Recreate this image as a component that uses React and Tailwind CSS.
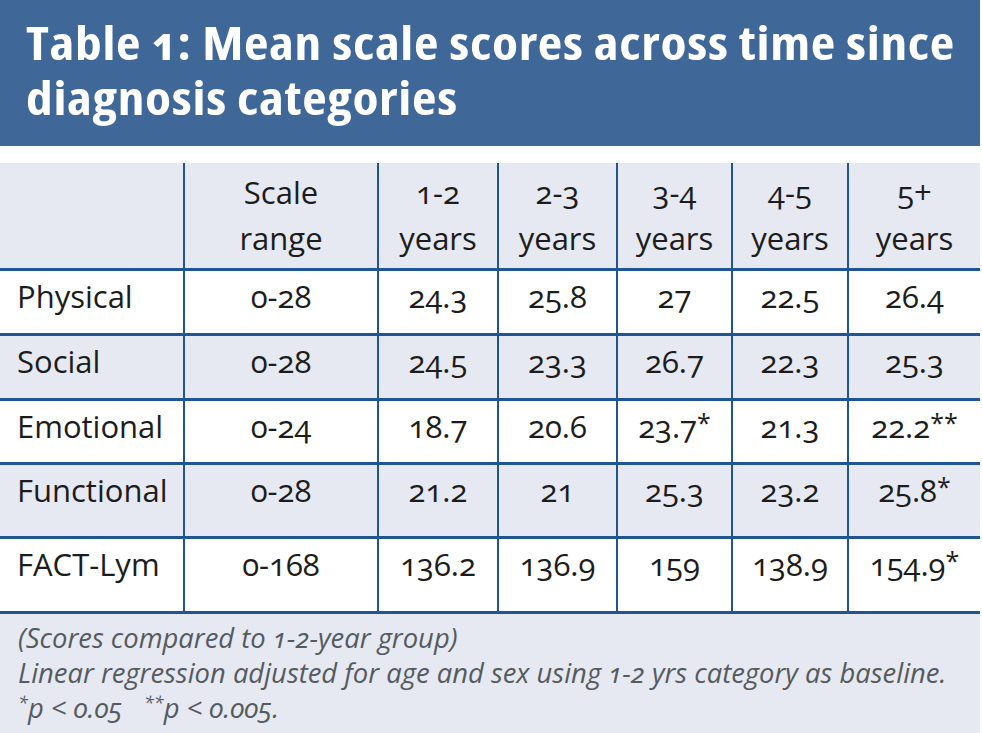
const cols = [
  'w-[183px]',
  'w-[194px]',
  'w-[120px]',
  'w-[119px]',
  'w-[115px]',
  'w-[116px]',
  'w-[133px]',
];

const rows = [
  { name: 'Physical', range: '0-28', vals: ['24.3', '25.8', '27', '22.5', '26.4'], h: 'h-[65px]', bg: 'bg-white' },
  { name: 'Social', range: '0-28', vals: ['24.5', '23.3', '26.7', '22.3', '25.3'], h: 'h-[65px]', bg: 'bg-[#e6e9f1]' },
  { name: 'Emotional', range: '0-24', vals: ['18.7', '20.6', '23.7|*', '21.3', '22.2|**'], h: 'h-[64px]', bg: 'bg-white' },
  { name: 'Functional', range: '0-28', vals: ['21.2', '21', '25.3', '23.2', '25.8|*'], h: 'h-[74px]', bg: 'bg-[#e6e9f1]' },
  { name: 'FACT-Lym', range: '0-168', vals: ['136.2', '136.9', '159', '138.9', '154.9|*'], h: 'h-[75px]', bg: 'bg-white' },
];

const heads = [
  ['Scale', 'range'],
  ['1-2', 'years'],
  ['2-3', 'years'],
  ['3-4', 'years'],
  ['4-5', 'years'],
  ['5+', 'years'],
];

function Value({ v }) {
  const [num, star] = v.split('|');
  return (
    <span>
      {num}
      {star && <sup className="text-[25px] leading-none relative -top-[6px]">{star}</sup>}
    </span>
  );
}

export default function App() {
  return (
    <div className="w-[982px] h-[733px] bg-white font-['Open_Sans',sans-serif] text-[#1c1c1c] [font-variant-numeric:oldstyle-nums]">
      {/* Title bar */}
      <div className="w-[980px] h-[146px] bg-[#3f6899] pl-[26px] pt-[15px] overflow-hidden">
        <h1 className="text-white font-bold text-[46px] leading-[55px] [font-stretch:75%] tracking-[0.6px] scale-x-[1.16] origin-left">
          Table 1: Mean scale scores across time since
          <br />
          diagnosis categories
        </h1>
      </div>

      <div className="h-[17px]" />

      {/* Table */}
      <div className="w-[980px] text-[31px] leading-[46px]">
        {/* Header row */}
        <div className="flex h-[105px] bg-[#e6e9f1]">
          <div className={cols[0]} />
          {heads.map((hd, i) => (
            <div key={i} className={`${cols[i + 1]} border-l-2 border-[#1f5593] pt-[6px] text-center`}>
              <div>{hd[0]}</div>
              <div>{hd[1]}</div>
            </div>
          ))}
        </div>

        {rows.map(r => (
          <div key={r.name} className={`flex ${r.h} ${r.bg} border-t-[3px] border-[#1f5593]`}>
            <div className={`${cols[0]} pl-[17px] pt-[2px]`}>{r.name}</div>
            <div className={`${cols[1]} border-l-2 border-[#1f5593] pt-[2px] text-center`}>{r.range}</div>
            {r.vals.map((v, i) => (
              <div key={i} className={`${cols[i + 2]} border-l-2 border-[#1f5593] pt-[2px] text-center`}>
                <Value v={v} />
              </div>
            ))}
          </div>
        ))}

        {/* Footnote */}
        <div className="h-[122px] bg-[#e6e9f1] border-t-[3px] border-[#1f5593] pl-[18px] pt-[6px] italic text-[27.4px] leading-[35px] text-[#555a60]">
          <div>(Scores compared to 1-2-year group)</div>
          <div>Linear regression adjusted for age and sex using 1-2 yrs category as baseline.</div>
          <div>
            <sup className="text-[18px] leading-none">*</sup>p &lt; 0.05&nbsp;&nbsp;&nbsp;
            <sup className="text-[18px] leading-none">**</sup>p &lt; 0.005.
          </div>
        </div>
      </div>
    </div>
  );
}
